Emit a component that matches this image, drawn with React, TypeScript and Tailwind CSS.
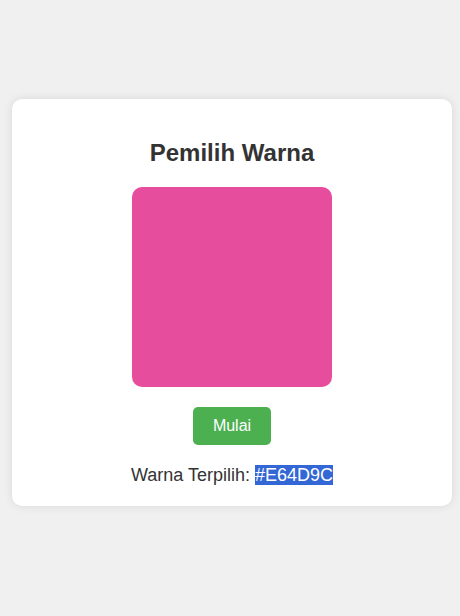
import React, { useState } from 'react';

export default function App() {
  const [color, setColor] = useState('#E64D9C');

  const randomize = () => {
    const hex = Math.floor(Math.random() * 0xffffff)
      .toString(16)
      .padStart(6, '0')
      .toUpperCase();
    setColor(`#${hex}`);
  };

  return (
    <div className="min-h-screen bg-[#f0f0f0] pt-[99px] font-['Liberation_Sans',Arial,sans-serif]">
      <div className="ml-3 w-[440px] bg-white rounded-[10px] shadow-[0_0_10px_rgba(0,0,0,0.1)] p-5 flex flex-col items-center text-center">
        <h1 className="mt-5 mb-5 text-[24px] leading-[28px] font-bold text-[#333]">Pemilih Warna</h1>
        <div className="w-[200px] h-[200px] rounded-[10px]" style={{ backgroundColor: color }} />
        <button
          onClick={randomize}
          className="mt-5 h-[38px] px-5 rounded-[5px] bg-[#4CAF50] text-white text-[16px] leading-[18px]"
        >
          Mulai
        </button>
        <p className="mt-5 text-[18px] leading-[21px] text-[#333]">
          Warna Terpilih: <span className="bg-[#3367d5] text-white">{color}</span>
        </p>
      </div>
    </div>
  );
}
